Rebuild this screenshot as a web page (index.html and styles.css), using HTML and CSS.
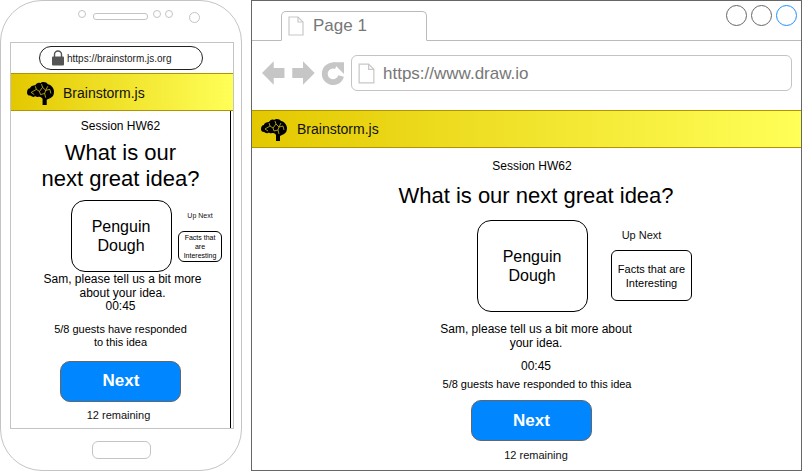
FILE: index.html
```html
<!DOCTYPE html>
<html lang="en">
<head>
  <meta charset="UTF-8" />
  <title>Brainstorm.js mockup</title>
  <link rel="stylesheet" href="styles.css">
</head>
<body>
  <svg class="defs" width="0" height="0">
    <symbol id="brain" viewBox="0 0 26 23">
      <path fill="#000" d="M0 11C0 9 1 7 3 7C3 5 6 4 8 4C9 2 11 1 13 2C15 0 19 1 20 3C23 3 26 7 26 10C26 13 25 15 23 16C22 17 20 17 19 18L19 23L15 23L15 17C14 15 12 15 11 15C9 16 8 14 7 15C5 16 4 14 3 14C1 14 0 13 0 11Z"/>
      <path fill="none" stroke="#e8d21a" stroke-width=".7" d="M4 11L9 8L12 10L15 6L18 9L22 8M12 10L13 13L17 12L18 9M17 12L18 16M9 8L8 5M15 6L14 3M4 11L7 13M18 9L20 5M22 8L23 12"/>
    </symbol>
    <symbol id="doc" viewBox="0 0 16 20">
      <path fill="#fff" stroke="#c8c8c8" stroke-width="1.2" d="M1 1H10L15 6V19H1Z"/>
      <path fill="none" stroke="#c8c8c8" stroke-width="1.2" d="M10 1V6H15"/>
    </symbol>
  </svg>

  <div class="phone">
    <div class="phone-top">
      <span class="dot"></span>
      <span class="speaker"></span>
      <span class="dot"></span>
      <span class="dot"></span>
      <span class="dot camera"></span>
    </div>
    <div class="screen">
      <div class="pill">
        <svg class="lock" viewBox="0 0 12 16"><path fill="none" stroke="#555" stroke-width="1.4" d="M2.5 7V4.500a3.500 3.500 0 0 1 7 0V7"/><rect y="6.500" width="12" height="9" rx="1" fill="#555"/></svg>
        <span>https://brainstorm.js.org</span>
      </div>
      <div class="brand-bar phone-bar">
        <svg class="brain-large"><use href="#brain"/></svg>
        <span>Brainstorm.js</span>
      </div>
      <div class="phone-body">
        <p class="session">Session HW62</p>
        <h1>What is our<br>next great idea?</h1>
        <div class="cards">
          <div class="card">Penguin<br>Dough</div>
          <div class="next-col">
            <p class="up-next">Up Next</p>
            <div class="mini-card">Facts that are Interesting</div>
          </div>
        </div>
        <p class="prompt">Sam, please tell us a bit more<br>about your idea.</p>
        <p class="timer">00:45</p>
        <p class="guests">5/8 guests have responded<br>to this idea</p>
        <button class="next-btn">Next</button>
        <p class="remaining">12 remaining</p>
      </div>
    </div>
    <span class="home"></span>
  </div>

  <div class="browser">
    <div class="tabstrip">
      <div class="tab">
        <svg class="doc-small"><use href="#doc"/></svg>
        <span>Page 1</span>
      </div>
      <div class="win-buttons">
        <span class="circle"></span>
        <span class="circle"></span>
        <span class="circle blue"></span>
      </div>
    </div>
    <div class="toolbar">
      <svg class="nav-icons" viewBox="0 0 84 26">
        <path fill="#c6c6c6" d="M0 13L12 1V8H23V18H12V25Z"/>
        <path fill="#c6c6c6" d="M54 13L42 1V8H31V18H42V25Z"/>
        <path fill="none" stroke="#c6c6c6" stroke-width="6" d="M81 16A8.500 8.500 0 1 1 76 6"/>
        <path fill="#c6c6c6" d="M72 2L84 2V14Z"/>
      </svg>
      <div class="address">
        <svg class="doc-large"><use href="#doc"/></svg>
        <span>https://www.draw.io</span>
      </div>
    </div>
    <div class="brand-bar desk-bar">
      <svg class="brain-small"><use href="#brain"/></svg>
      <span>Brainstorm.js</span>
    </div>
    <div class="desk-body">
      <p class="session">Session HW62</p>
      <h1>What is our next great idea?</h1>
      <div class="desk-cards">
        <div class="card">Penguin<br>Dough</div>
        <div class="desk-next">
          <p class="up-next">Up Next</p>
          <div class="mini-card">Facts that are Interesting</div>
        </div>
      </div>
      <p class="prompt">Sam, please tell us a bit more about<br>your idea.</p>
      <p class="timer">00:45</p>
      <p class="guests">5/8 guests have responded to this idea</p>
      <button class="next-btn">Next</button>
      <p class="remaining">12 remaining</p>
    </div>
  </div>
</body>
</html>
```

FILE: styles.css
```css
* {
  box-sizing: border-box;
}

html,
body {
  height: 100%;
}

body {
  margin: 0;
  overflow: hidden;
  background-color: #fff;
  color: #000;
  font-family: "Liberation Sans", Arial, sans-serif;
}

p,
h1 {
  margin: 0;
  font-weight: normal;
  text-align: center;
}

.defs {
  position: absolute;
}

/* phone */
.phone {
  position: absolute;
  left: 0;
  top: 0;
  width: 242px;
  height: 471px;
  border: 1px solid #c4c4c4;
  border-radius: 42px;
  background-color: #fff;
}

.phone-top {
  display: flex;
  align-items: center;
  height: 41px;
  padding: 2px 0 0 77px;
}

.dot {
  width: 8px;
  height: 8px;
  margin-top: -17px;
  border: 1px solid #c4c4c4;
  border-radius: 50%;
}

.speaker {
  width: 55px;
  height: 7px;
  margin: -13px 5px 0 7px;
  border: 1px solid #c4c4c4;
  border-radius: 3px;
}

.dot + .dot {
  margin-left: 4px;
}

.dot.camera {
  width: 11px;
  height: 11px;
  margin: -11px 0 0 16px;
}

.screen {
  width: 224px;
  height: 387px;
  margin-left: 9px;
  border: 1px solid #c4c4c4;
}

.pill {
  display: flex;
  align-items: center;
  gap: 3px;
  width: 164px;
  height: 24px;
  margin: 3px 0 3px 28px;
  padding-left: 12px;
  border: 1px solid #222;
  border-radius: 12px;
  color: #222;
  font-size: 10px;
}

.lock {
  width: 12px;
  height: 16px;
}

.brand-bar {
  display: flex;
  align-items: center;
  border-top: 1px solid #b09500;
  border-bottom: 1px solid #b09500;
  background: linear-gradient(to right, #e3c800, #ffff58);
  color: #111;
  font-size: 14px;
}

.phone-bar {
  height: 38px;
  padding: 1px 0 0 16px;
}

.brain-large {
  width: 27px;
  height: 24px;
  margin-right: 9px;
}

.phone-body {
  display: flex;
  flex-direction: column;
  align-items: center;
  height: 317px;
  margin-right: 2px;
  padding-top: 8px;
  border-right: 1px solid #000;
}

.session {
  font-size: 12px;
  line-height: 14px;
}

.phone-body h1 {
  margin-top: 7px;
  font-size: 22px;
  line-height: 26px;
}

.card {
  display: flex;
  align-items: center;
  justify-content: center;
  border: 1px solid #000;
  border-radius: 14px;
  font-size: 16px;
  line-height: 19px;
  text-align: center;
}

.mini-card {
  display: flex;
  align-items: center;
  justify-content: center;
  border: 1px solid #000;
  border-radius: 6px;
  text-align: center;
}

.up-next {
  color: #111;
}

.cards {
  display: flex;
  gap: 6px;
  align-self: flex-start;
  margin: 8px 0 0 60px;
}

.cards .card {
  width: 101px;
  height: 72px;
  padding: 0 1px 1px 0;
}

.next-col {
  width: 44px;
  font-size: 7px;
}

.cards .up-next {
  margin-top: 12px;
  line-height: 8px;
}

.cards .mini-card {
  width: 44px;
  height: 31px;
  margin-top: 11px;
  padding: 0 3px;
  line-height: 9px;
}

.phone-body .prompt {
  margin-top: 1px;
  padding-left: 4px;
  font-size: 12px;
  line-height: 13.500px;
}

.phone-body .timer {
  margin-top: 0;
  line-height: 13.500px;
}

.phone-body .guests {
  margin-top: 9px;
  font-size: 11px;
  line-height: 13px;
}

.next-btn {
  display: block;
  width: 121px;
  height: 41px;
  padding: 0 0 0 1px;
  border: 1px solid #666;
  border-radius: 10px;
  background-color: #0087ff;
  color: #fff;
  font-family: inherit;
  font-size: 17px;
  font-weight: bold;
}

.phone-body .next-btn {
  margin-top: 12px;
}

.remaining {
  color: #111;
  font-size: 11px;
  line-height: 13px;
}

.phone-body .remaining {
  margin: 7px 4px 0 0;
}

.home {
  display: block;
  width: 59px;
  height: 18px;
  margin: 12px 0 0 91px;
  border: 1px solid #c4c4c4;
  border-radius: 6px;
}

/* browser window */
.browser {
  position: absolute;
  left: 251px;
  top: 0;
  width: 551px;
  height: 471px;
  border: 1px solid #666;
}

.tabstrip {
  display: flex;
  align-items: flex-end;
  justify-content: space-between;
  height: 40px;
  padding-left: 29px;
  border-bottom: 1px solid #bbb;
}

.tab {
  display: flex;
  align-items: center;
  gap: 9px;
  width: 146px;
  height: 30px;
  margin-bottom: -1px;
  padding-left: 6px;
  border: 1px solid #bbb;
  border-bottom: 1px solid #fff;
  border-radius: 5px 5px 0 0;
  color: #777;
  font-size: 17px;
}

.doc-small {
  width: 16px;
  height: 20px;
}

.win-buttons {
  display: flex;
  gap: 4px;
  align-self: flex-start;
  margin-top: 4px;
  padding-right: 4px;
}

.circle {
  width: 21px;
  height: 21px;
  border: 1px solid #666;
  border-radius: 50%;
}

.circle.blue {
  border-color: #1e90ff;
}

.toolbar {
  display: flex;
  align-items: center;
  gap: 7px;
  height: 69px;
  padding: 0 9px 5px 10px;
}

.nav-icons {
  width: 82px;
  height: 26px;
}

.address {
  display: flex;
  align-items: center;
  gap: 8px;
  flex: 1;
  height: 36px;
  padding: 1px 0 0 6px;
  border: 1px solid #c4c4c4;
  border-radius: 6px;
  color: #777;
  font-size: 17px;
}

.doc-large {
  width: 17px;
  height: 21px;
}

.desk-bar {
  height: 38px;
  padding-left: 9px;
}

.brain-small {
  width: 26px;
  height: 23px;
  margin-right: 10px;
}

.desk-body {
  display: flex;
  flex-direction: column;
  align-items: center;
  padding: 11px 0 0 19px;
}

.desk-body .session {
  margin-right: 8px;
}

.desk-body h1 {
  margin-top: 10px;
  font-size: 22px;
  line-height: 26px;
}

.desk-cards {
  display: flex;
  gap: 23px;
  align-self: flex-start;
  margin: 11px 0 0 206px;
}

.desk-cards .card {
  width: 111px;
  height: 92px;
  padding: 0 1px 1px 0;
  border-radius: 14px;
}

.desk-next {
  width: 81px;
  font-size: 11px;
}

.desk-cards .up-next {
  margin-top: 9px;
  padding-right: 20px;
  line-height: 13px;
}

.desk-cards .mini-card {
  width: 81px;
  height: 51px;
  margin-top: 8px;
  padding: 0 4px;
  line-height: 14px;
}

.desk-body .prompt {
  margin-top: 10px;
  font-size: 12px;
  line-height: 14px;
}

.timer {
  margin-top: 9px;
  font-size: 12px;
  line-height: 14px;
}

.desk-body .guests {
  margin: 5px 0 0 2px;
  font-size: 11px;
  line-height: 13px;
}

.desk-body .next-btn {
  margin: 9px 10px 0 0;
}

.desk-body .remaining {
  margin-top: 8px;
}
```
